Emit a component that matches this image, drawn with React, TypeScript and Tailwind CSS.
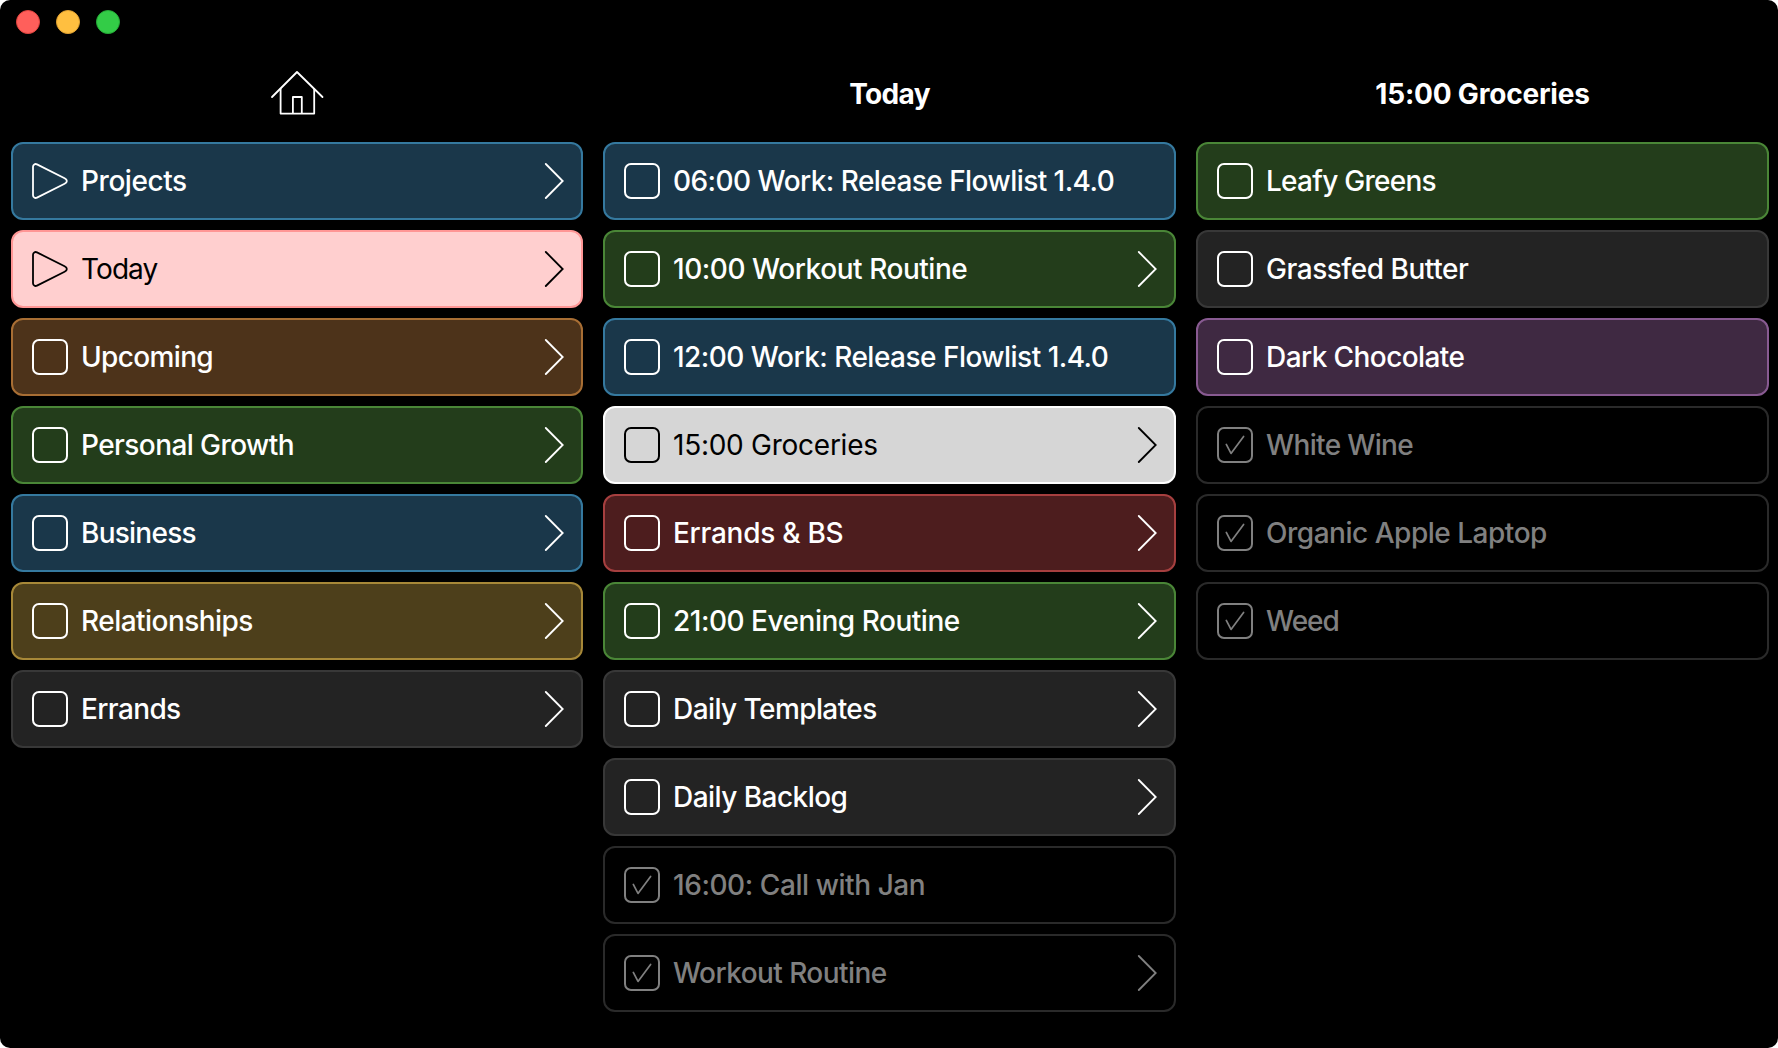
import React from 'react';

const tones = {
  blue: 'bg-[#1a374a] border-[#35799f] text-white',
  pink: 'bg-[#ffcfcf] border-[#ff9695] text-black',
  orange: 'bg-[#4d331a] border-[#a86e34] text-white',
  green: 'bg-[#233d1b] border-[#4a8637] text-white',
  yellow: 'bg-[#4d3f1b] border-[#a78838] text-white',
  gray: 'bg-[#232323] border-[#383838] text-white',
  light: 'bg-[#d6d6d6] border-white text-black',
  red: 'bg-[#4d1d1e] border-[#a63f3f] text-white',
  purple: 'bg-[#3f2942] border-[#885a91] text-white',
  done: 'bg-black border-[#2a2a2a] text-[#808080]',
};

type Item = {
  label: string;
  tone: keyof typeof tones;
  tracking: string;
  play?: boolean;
  more?: boolean;
};

const home: Item[] = [
  { label: 'Projects', tone: 'blue', tracking: 'tracking-[-0.44px]', play: true, more: true },
  { label: 'Today', tone: 'pink', tracking: 'tracking-[-0.9px]', play: true, more: true },
  { label: 'Upcoming', tone: 'orange', tracking: 'tracking-[-0.65px]', more: true },
  { label: 'Personal Growth', tone: 'green', tracking: 'tracking-[-0.58px]', more: true },
  { label: 'Business', tone: 'blue', tracking: 'tracking-[-0.75px]', more: true },
  { label: 'Relationships', tone: 'yellow', tracking: 'tracking-[-0.54px]', more: true },
  { label: 'Errands', tone: 'gray', tracking: 'tracking-[-0.62px]', more: true },
];

const today: Item[] = [
  { label: '06:00 Work: Release Flowlist 1.4.0', tone: 'blue', tracking: 'tracking-[-0.55px]' },
  { label: '10:00 Workout Routine', tone: 'green', tracking: 'tracking-[-0.45px]', more: true },
  { label: '12:00 Work: Release Flowlist 1.4.0', tone: 'blue', tracking: 'tracking-[-0.52px]' },
  { label: '15:00 Groceries', tone: 'light', tracking: 'tracking-[-0.26px]', more: true },
  { label: 'Errands & BS', tone: 'red', tracking: 'tracking-[-0.27px]', more: true },
  { label: '21:00 Evening Routine', tone: 'green', tracking: 'tracking-[-0.48px]', more: true },
  { label: 'Daily Templates', tone: 'gray', tracking: 'tracking-[-0.58px]', more: true },
  { label: 'Daily Backlog', tone: 'gray', tracking: 'tracking-[-0.54px]', more: true },
  { label: '16:00: Call with Jan', tone: 'done', tracking: 'tracking-[-0.43px]' },
  { label: 'Workout Routine', tone: 'done', tracking: 'tracking-[-0.56px]', more: true },
];

const groceries: Item[] = [
  { label: 'Leafy Greens', tone: 'green', tracking: 'tracking-[-0.73px]' },
  { label: 'Grassfed Butter', tone: 'gray', tracking: 'tracking-[-0.47px]' },
  { label: 'Dark Chocolate', tone: 'purple', tracking: 'tracking-[-0.58px]' },
  { label: 'White Wine', tone: 'done', tracking: 'tracking-[-0.65px]' },
  { label: 'Organic Apple Laptop', tone: 'done', tracking: 'tracking-[-0.48px]' },
  { label: 'Weed', tone: 'done', tracking: 'tracking-[-1px]' },
];

function PlayIcon() {
  return (
    <svg className="size-9 shrink-0" viewBox="0 0 36 36" fill="none" stroke="currentColor" strokeWidth="1.8" strokeLinejoin="round">
      <path d="M1 3.8C1 1.6 3 0.4 5 1.4L32.6 15.3C35.6 16.8 35.6 19.2 32.6 20.7L5 34.6C3 35.6 1 34.4 1 32.2Z" />
    </svg>
  );
}

function Checkbox({ checked }: { checked: boolean }) {
  return (
    <span className="size-9 shrink-0 rounded-[7px] border-2 border-current">
      {checked && (
        <svg className="size-8" viewBox="2 2 32 32" fill="none" stroke="currentColor" strokeWidth="1.7" strokeLinecap="round" strokeLinejoin="round">
          <path d="M9.3 17.4L14 26.4L26.6 9.4" />
        </svg>
      )}
    </span>
  );
}

function Chevron() {
  return (
    <svg className="ml-auto h-9 w-5 shrink-0" viewBox="0 0 20 36" fill="none" stroke="currentColor" strokeWidth="1.8" strokeLinecap="round">
      <path d="M1.8 1L18.7 18L1.8 35" />
    </svg>
  );
}

function HomeIcon() {
  return (
    <svg className="mb-0.5 h-[46px] w-[54px]" viewBox="0 0 54 46" fill="none" stroke="white" strokeWidth="1.8" strokeLinecap="round" strokeLinejoin="round">
      <path d="M2 27L27 2L52.5 27" />
      <path d="M10.6 19V43.6H44.2V19" />
      <path d="M22.9 43V27H31.8V43" />
    </svg>
  );
}

function Row({ item }: { item: Item }) {
  const dark = item.tone === 'pink' || item.tone === 'light';
  return (
    <li className={`flex h-[78px] items-center gap-[13px] rounded-xl border-2 pr-[17px] pl-[19px] text-[28px] leading-9 ${dark ? 'font-normal' : 'font-medium'} ${tones[item.tone]}`}>
      {item.play ? <PlayIcon /> : <Checkbox checked={item.tone === 'done'} />}
      <span className={`whitespace-nowrap ${item.tracking}`}>{item.label}</span>
      {item.more && <Chevron />}
    </li>
  );
}

function Column({ heading, items }: { heading: React.ReactNode; items: Item[] }) {
  return (
    <section>
      <header className="flex h-24 items-center justify-center text-[28px] font-bold text-white">{heading}</header>
      <ul className="flex flex-col gap-2.5">
        {items.map((item) => (
          <Row key={item.label} item={item} />
        ))}
      </ul>
    </section>
  );
}

export default function App() {
  return (
    <div className="h-[1048px] w-[1778px] bg-white">
      <main className="flex h-full flex-col overflow-hidden rounded-[10px] bg-black font-['Inter',sans-serif]">
        <div className="flex h-[46px] shrink-0 gap-4 pt-2.5 pl-4">
          <span className="size-6 rounded-full border border-[#e0443e] bg-[#ff5f5b]" />
          <span className="size-6 rounded-full border border-[#e0a030] bg-[#ffbf40]" />
          <span className="size-6 rounded-full border border-[#24aa36] bg-[#33cc47]" />
        </div>
        <div className="grid grid-cols-[572px_573px_573px] gap-5 pl-[11px]">
          <Column heading={<HomeIcon />} items={home} />
          <Column heading={<h2 className="tracking-[-0.65px]">Today</h2>} items={today} />
          <Column heading={<h2 className="tracking-[-0.2px]">15:00 Groceries</h2>} items={groceries} />
        </div>
      </main>
    </div>
  );
}
